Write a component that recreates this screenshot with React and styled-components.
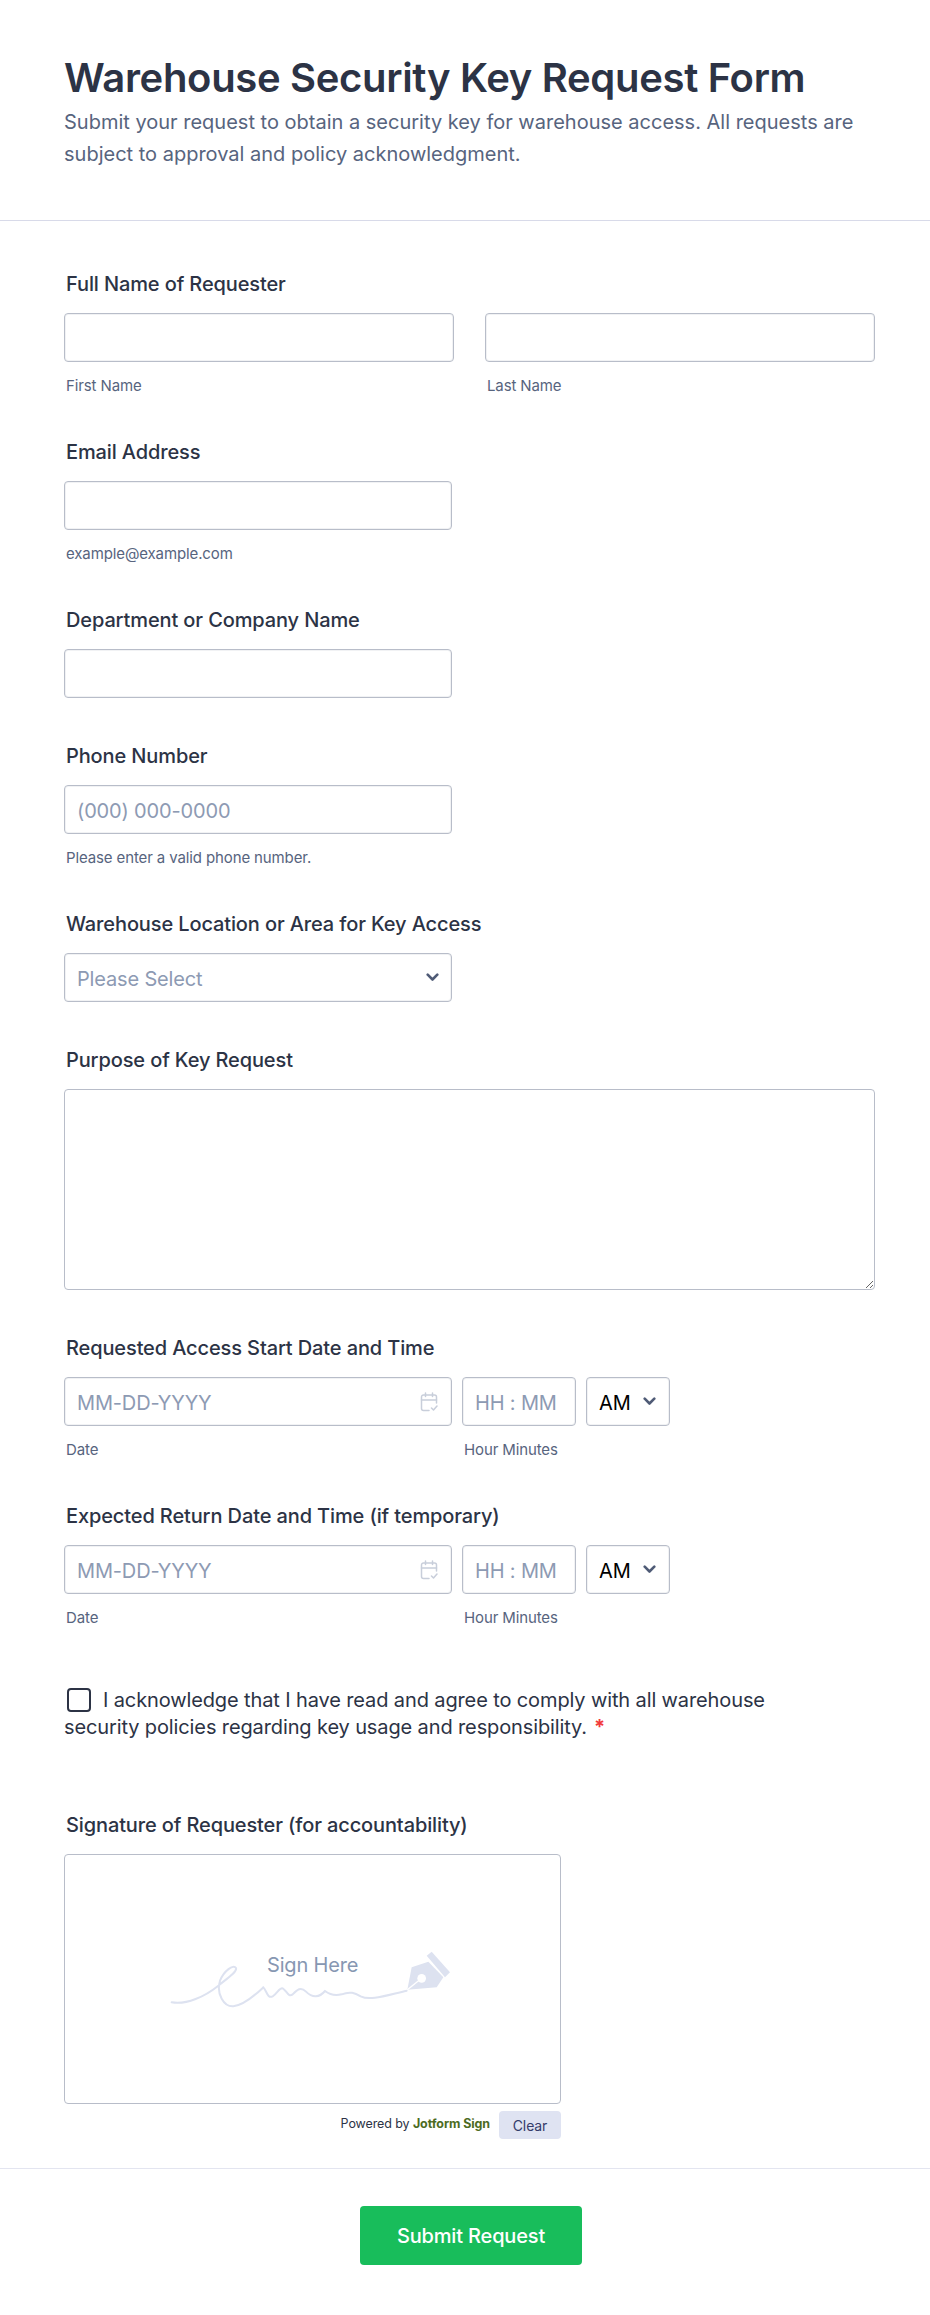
import React from 'react';
import styled, { createGlobalStyle } from 'styled-components';

const GlobalStyle = createGlobalStyle`
	* { box-sizing: border-box; letter-spacing: -0.008em; }
	html, body { margin: 0; padding: 0; background: #fff; }
	body { font-family: Inter, "Liberation Sans", sans-serif; color: #2c3345; }
`;

const Page = styled.div`
	width: 930px;
	height: 2315px;
	background: #fff;
`;

const Header = styled.header`
	padding: 54px 64px 50px;
	border-bottom: 1px solid #d8dae9;
`;

const Title = styled.h1`
	margin: 0;
	font-size: 40px;
	line-height: 48px;
	font-weight: 600;
	color: #2c3345;
`;

const Description = styled.p`
	margin: 4px 0 0;
	font-size: 20px;
	line-height: 32px;
	letter-spacing: 0;
	color: #57647e;
`;

const Form = styled.form`
	display: flex;
	flex-direction: column;
	gap: 45px;
	padding: 50px 55px 0 64px;
`;

const Field = styled.div`
	display: flex;
	flex-direction: column;
`;

const Label = styled.label`
	display: block;
	padding: 1px 0 0 2px;
	margin-bottom: 17px;
	font-size: 20px;
	line-height: 24px;
	font-weight: 500;
	letter-spacing: -0.006em;
	color: #2c3345;
`;

const Row = styled.div`
	display: flex;
	gap: ${p => p.$gap || 10}px;
`;

const Cell = styled.div`
	display: flex;
	flex-direction: column;
	position: relative;
	width: ${p => p.$width}px;
`;

const TextInput = styled.input`
	display: block;
	width: 100%;
	height: 49px;
	padding: 2px 12px 0;
	border: 1px solid #b8bdc9;
	border-radius: 4px;
	background: #fff;
	box-shadow: inset 0 0 0 1px rgba(184, 189, 201, 0.2);
	font-family: inherit;
	font-size: 20px;
	color: #2c3345;
	outline: none;

	&::placeholder {
		color: #8d9ab3;
		opacity: 1;
	}
`;

const SelectBox = styled.select`
	display: block;
	width: 100%;
	height: 49px;
	padding: 2px 12px 0;
	border: 1px solid #b8bdc9;
	border-radius: 4px;
	background: #fff;
	box-shadow: inset 0 0 0 1px rgba(184, 189, 201, 0.2);
	appearance: none;
	font-family: inherit;
	font-size: 20px;
	color: ${p => (p.$filled ? '#000' : '#8d9ab3')};
	outline: none;
`;

const Chevron = styled.svg`
	position: absolute;
	top: 20px;
	right: ${p => p.$right}px;
	width: 13px;
	height: 9px;
	pointer-events: none;
`;

const CalendarIcon = styled.svg`
	position: absolute;
	top: 15px;
	right: 14px;
	width: 18px;
	height: 20px;
	pointer-events: none;
`;

const TextArea = styled.textarea`
	display: block;
	width: 100%;
	height: 201px;
	padding: 10px 12px;
	border: 1px solid #b8bdc9;
	border-radius: 4px;
	background: #fff;
	font-family: inherit;
	font-size: 20px;
	outline: none;
	resize: vertical;
`;

const SubLabel = styled.span`
	display: block;
	margin-top: 15px;
	padding-left: 2px;
	font-size: 15px;
	line-height: 17px;
	color: #57647e;
`;

const Consent = styled.div`
	width: 720px;
	padding: 16px 0 26px;
	font-size: 20px;
	line-height: 27px;
	letter-spacing: -0.006em;
	color: #2c3345;
`;

const CheckBox = styled.input`
	appearance: none;
	display: inline-block;
	width: 24px;
	height: 24px;
	margin: 0 12px 0 3px;
	border: 2px solid #2c3345;
	border-radius: 4px;
	background: #fff;
	vertical-align: -5px;
`;

const Required = styled.span`
	margin-left: 7px;
	font-weight: 700;
	color: #f23a3c;
`;

const SignatureBox = styled.div`
	position: relative;
	display: flex;
	align-items: center;
	justify-content: center;
	width: 497px;
	height: 250px;
	padding-left: 14px;
	border: 1px solid #b8bdc9;
	border-radius: 4px;
	background: #fff;
`;

const SignHere = styled.span`
	position: absolute;
	top: 96px;
	left: 202px;
	font-size: 20px;
	line-height: 28px;
	color: #8797b2;
`;

const SignatureFooter = styled.div`
	display: flex;
	align-items: center;
	justify-content: flex-end;
	gap: 9px;
	width: 497px;
	margin-top: 7px;
`;

const PoweredBy = styled.span`
	padding-bottom: 3px;
	font-size: 12.5px;
	color: #2c3345;

	strong {
		font-weight: 700;
		color: #4c6b1f;
	}
`;

const ClearButton = styled.button`
	width: 62px;
	height: 28px;
	padding: 0;
	border: 0;
	border-radius: 4px;
	background: #dfe3f2;
	font-family: inherit;
	font-size: 14px;
	color: #343c6a;
`;

const Footer = styled.footer`
	display: flex;
	justify-content: center;
	margin-top: 29px;
	padding: 37px 0 50px 12px;
	border-top: 1px solid #e3e5f0;
`;

const SubmitButton = styled.button`
	width: 222px;
	height: 59px;
	border: 0;
	border-radius: 4px;
	background: #18bd5b;
	font-family: inherit;
	font-size: 20px;
	font-weight: 500;
	color: #fff;
`;

const ChevronDown = ({ right }) => (
	<Chevron $right={right} viewBox="0 0 13 9">
		<path d="M1.7 1.7 6.5 6.5l4.8-4.8" fill="none" stroke="#4f5b76" strokeWidth="2.6" strokeLinecap="round" strokeLinejoin="round" />
	</Chevron>
);

const Calendar = () => (
	<CalendarIcon viewBox="0 0 18 20" fill="none" stroke="#c8ceda" strokeWidth="1.5" strokeLinecap="round" strokeLinejoin="round">
		<path d="M9 18.5H3.5a2 2 0 0 1-2-2V5a2 2 0 0 1 2-2h11a2 2 0 0 1 2 2v6" />
		<path d="M5.5 1v3.5M12.5 1v3.5M1.5 8h15" />
		<path d="m11.5 16 2 2 3.5-4" />
	</CalendarIcon>
);

const DateTime = ({ label }) => (
	<Field>
		<Label>{label}</Label>
		<Row $gap={10}>
			<Cell $width={388}>
				<TextInput placeholder="MM-DD-YYYY" />
				<Calendar />
				<SubLabel>Date</SubLabel>
			</Cell>
			<Cell $width={114}>
				<TextInput placeholder="HH : MM" />
				<SubLabel>Hour Minutes</SubLabel>
			</Cell>
			<Cell $width={84}>
				<SelectBox $filled defaultValue="AM">
					<option>AM</option>
					<option>PM</option>
				</SelectBox>
				<ChevronDown right={14} />
			</Cell>
		</Row>
	</Field>
);

const App = () => {
	return (
		<Page>
			<GlobalStyle />
			<Header>
				<Title>Warehouse Security Key Request Form</Title>
				<Description>
					Submit your request to obtain a security key for warehouse access. All requests are subject to approval and policy acknowledgment.
				</Description>
			</Header>
			<Form onSubmit={e => e.preventDefault()}>
				<Field>
					<Label>Full Name of Requester</Label>
					<Row $gap={31}>
						<Cell $width={390}>
							<TextInput />
							<SubLabel>First Name</SubLabel>
						</Cell>
						<Cell $width={390}>
							<TextInput />
							<SubLabel>Last Name</SubLabel>
						</Cell>
					</Row>
				</Field>
				<Field>
					<Label>Email Address</Label>
					<Cell $width={388}>
						<TextInput />
						<SubLabel>example@example.com</SubLabel>
					</Cell>
				</Field>
				<Field>
					<Label>Department or Company Name</Label>
					<Cell $width={388}>
						<TextInput />
					</Cell>
				</Field>
				<Field>
					<Label>Phone Number</Label>
					<Cell $width={388}>
						<TextInput placeholder="(000) 000-0000" />
						<SubLabel>Please enter a valid phone number.</SubLabel>
					</Cell>
				</Field>
				<Field>
					<Label>Warehouse Location or Area for Key Access</Label>
					<Cell $width={388}>
						<SelectBox defaultValue="">
							<option value="">Please Select</option>
						</SelectBox>
						<ChevronDown right={13} />
					</Cell>
				</Field>
				<Field>
					<Label>Purpose of Key Request</Label>
					<TextArea />
				</Field>
				<DateTime label="Requested Access Start Date and Time" />
				<DateTime label="Expected Return Date and Time (if temporary)" />
				<Consent>
					<CheckBox type="checkbox" />
					I acknowledge that I have read and agree to comply with all warehouse security policies regarding key usage and responsibility.
					<Required>*</Required>
				</Consent>
				<Field>
					<Label>Signature of Requester (for accountability)</Label>
					<SignatureBox>
						<svg width="340" height="120" viewBox="0 0 1020 360">
							<path
								d="M65 250C110 258 165 232 205 200C232 178 262 158 258 147C250 135 222 155 210 185C198 225 222 264 250 262C285 258 322 222 340 205C350 215 352 240 368 232C382 224 388 205 398 208C410 214 414 236 428 226C442 212 452 202 468 218C488 238 508 236 525 216C538 226 552 232 575 226C600 216 615 222 632 232C660 246 705 230 770 215"
								fill="none"
								stroke="#dde2f0"
								strokeWidth="6"
								strokeLinecap="round"
							/>
							<path d="M830 110 845 98 900 160 885 175Z" fill="#dde2f0" />
							<path d="M785 145 835 128 880 175 860 205 772 212Z" fill="#dde2f0" />
							<circle cx="815" cy="178" r="13" fill="#fff" />
							<path d="M772 212 815 178" stroke="#fff" strokeWidth="4" />
						</svg>
						<SignHere>Sign Here</SignHere>
					</SignatureBox>
					<SignatureFooter>
						<PoweredBy>Powered by <strong>Jotform Sign</strong></PoweredBy>
						<ClearButton type="button">Clear</ClearButton>
					</SignatureFooter>
				</Field>
			</Form>
			<Footer>
				<SubmitButton type="submit">Submit Request</SubmitButton>
			</Footer>
		</Page>
	);
};

export default App;
